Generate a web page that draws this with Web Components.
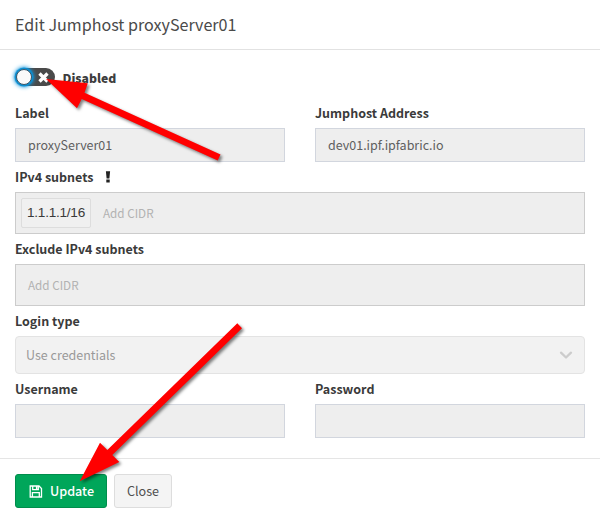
<!DOCTYPE html>
<html lang="en">
<head>
<meta charset="utf-8">
<title>Edit Jumphost</title>
<style>
html, body { margin: 0; background: #fff; }
body { width: 600px; height: 523px; overflow: hidden; position: relative;
  font-family: "Noto Sans CJK SC", "Noto Sans", sans-serif; font-size: 12.5px; color: #333; }
</style>
</head>
<body>
<jump-dialog>
  <span slot="title">Edit Jumphost proxyServer01</span>
  <state-toggle>Disabled</state-toggle>
  <form-row>
    <form-field label="Label"><text-box>proxyServer01</text-box></form-field>
    <form-field label="Jumphost Address"><text-box>dev01.ipf.ipfabric.io</text-box></form-field>
  </form-row>
  <form-field label="IPv4 subnets" required><cidr-box><cidr-tag>1.1.1.1/16</cidr-tag></cidr-box></form-field>
  <form-field label="Exclude IPv4 subnets"><cidr-box></cidr-box></form-field>
  <form-field label="Login type"><select-box>Use credentials</select-box></form-field>
  <form-row>
    <form-field label="Username"><text-box></text-box></form-field>
    <form-field label="Password"><text-box></text-box></form-field>
  </form-row>
  <push-button slot="footer" primary>Update</push-button>
  <push-button slot="footer">Close</push-button>
</jump-dialog>
<pointer-arrows></pointer-arrows>
<script>
function define(name, markup, setup) {
  customElements.define(name, class extends HTMLElement {
    connectedCallback() {
      if (this.shadowRoot) return;
      this.attachShadow({ mode: "open" }).innerHTML = markup;
      if (setup) setup(this, this.shadowRoot);
    }
  });
}
define("jump-dialog", `<style>
  :host { display: flex; flex-direction: column; }
  header { height: 49px; box-sizing: border-box; padding: 0 15px 2px; display: flex; align-items: center;
    font-size: 16.1px; line-height: 24px; color: #4a4a4a; white-space: nowrap; }
  main { border-top: 1px solid #e2e2e2; padding: 18px 15px 20px; display: flex; flex-direction: column; }
  footer { border-top: 1px solid #e5e5e5; padding: 15px; display: flex; gap: 7px; }
</style><header><slot name="title"></slot></header><main><slot></slot></main><footer><slot name="footer"></slot></footer>`);

define("state-toggle", `<style>
  :host { display: flex; align-items: center; gap: 7.5px; height: 18px; margin-bottom: 12px; font-weight: 700; color: #3d3d3d; }
  .track { width: 40px; height: 18px; border-radius: 9px; background: #4a4a4a; display: flex; align-items: center; justify-content: space-between; box-sizing: border-box; padding: 0 6px 0 1px; }
  .knob { width: 16px; height: 16px; box-sizing: border-box; border: 0.8px solid #3b5566; border-radius: 50%; background: #fafafa; box-shadow: 0 0 1px 1.5px #0a8ed2, 0 0 4px 2px #1a9ade; }
  b { line-height: 20px; font-size: 12.2px; padding-top: 2px; }
</style><span class="track"><span class="knob"></span><svg width="11" height="11" viewBox="0 0 11 11"><path d="M1.5 1.5L9.5 9.5M9.5 1.5L1.5 9.5" stroke="#fff" stroke-width="3.3"/></svg></span><b><slot></slot></b>`);

define("form-row", `<style>:host { display: grid; grid-template-columns: 1fr 1fr; gap: 30px; }</style><slot></slot>`);

define("form-field", `<style>
  :host { display: flex; flex-direction: column; min-width: 0; }
  .label { height: 30px; line-height: 30px; font-weight: 700; display: flex; align-items: center; color: #3a3a3a; white-space: nowrap; }
  svg { margin-left: 11px; }
</style><div class="label"><span></span></div><slot></slot>`, (host, root) => {
  root.querySelector("span").textContent = host.getAttribute("label");
  if (host.hasAttribute("required"))
    root.querySelector(".label").insertAdjacentHTML("beforeend",
      `<svg width="6" height="12" viewBox="0 0 6 12"><path d="M0.9 0.2H5.1L4.4 7.4H1.6ZM1.3 8.6H4.7V11.6H1.3Z" fill="#222"/></svg>`);
});

define("text-box", `<style>
  :host { display: block; height: 34px; box-sizing: border-box; border: 1px solid #d2d6de; background: #eee; color: #5f5f5f; padding: 0 12px; line-height: 31px; white-space: nowrap; }
</style><slot></slot>`);

define("cidr-box", `<style>
  :host { display: flex; align-items: center; height: 42px; box-sizing: border-box; border: 1px solid #ccc; background: #eee; padding: 0 5px; gap: 5px; }
  .hint { color: #b2b2b2; padding: 0 0 1px 7px; line-height: 20px; font-size: 11.7px; }
</style><slot></slot><span class="hint">Add CIDR</span>`);

define("cidr-tag", `<style>
  :host { display: block; box-sizing: border-box; width: 70px; height: 30px; border: 1px solid #ddd; border-radius: 2px; background: #f0f0f0; text-align: center; line-height: 28px; color: #3a3a3a; font-family: "Liberation Sans", sans-serif; font-size: 13.6px; letter-spacing: -0.25px; white-space: nowrap; }
</style><slot></slot>`);

define("select-box", `<style>
  :host { display: flex; align-items: center; justify-content: space-between; height: 38px; box-sizing: border-box; border: 1px solid #e3e3e3; border-radius: 4px; background: #f2f2f2; color: #999; padding: 0 11px 0 10px; }
  span { line-height: 20px; padding-bottom: 1px; }
</style><span><slot></slot></span><svg width="14" height="10" viewBox="0 0 14 10"><path d="M2 2.7L7 7.5L12 2.7" fill="none" stroke="#ccc" stroke-width="2.3" stroke-linecap="round" stroke-linejoin="round"/></svg>`);

define("push-button", `<style>
  :host { display: flex; align-items: center; justify-content: center; box-sizing: border-box; width: 58px; height: 34px; border: 1px solid #ddd; border-radius: 3px; background: #f4f4f4; color: #4f4f4f; font-size: 12.6px; line-height: 20px; }
  :host([primary]) { width: 92px; background: #00a65a; border-color: #008d4c; color: #fff; font-weight: 500; padding-left: 1px; }
  svg { margin-right: 7px; }
</style><slot></slot>`, (host, root) => {
  if (host.hasAttribute("primary"))
    root.querySelector("slot").insertAdjacentHTML("beforebegin",
      `<svg width="14" height="13" viewBox="0 0 14 13" fill="none" stroke="#fff" stroke-width="1.3"><path d="M1.2 1H10L12.5 3.5V12H1.2ZM3.7 1V4.6H9.3V1M3.4 12V7.7H10.3V12"/><path d="M7.7 1V4.5" stroke-width="1.6"/></svg>`);
});

define("pointer-arrows", `<style>
  :host { position: absolute; inset: 0; pointer-events: none; }
  svg { display: block; filter: drop-shadow(2px 2.5px 1.6px rgba(0,0,0,.5)); }
</style><svg width="600" height="523" viewBox="0 0 600 523" fill="#f00">
<path d="M46 79L87.8 83.3L84.5 92.7L220.5 154.5L217.7 160.5L81.7 99L77 108.3Z"/>
<path d="M79.7 481.3L100 442.7L107.3 450L237.3 323.3L242 328.3L112.3 455L119.3 462Z"/></svg>`);
</script>
</body>
</html>
